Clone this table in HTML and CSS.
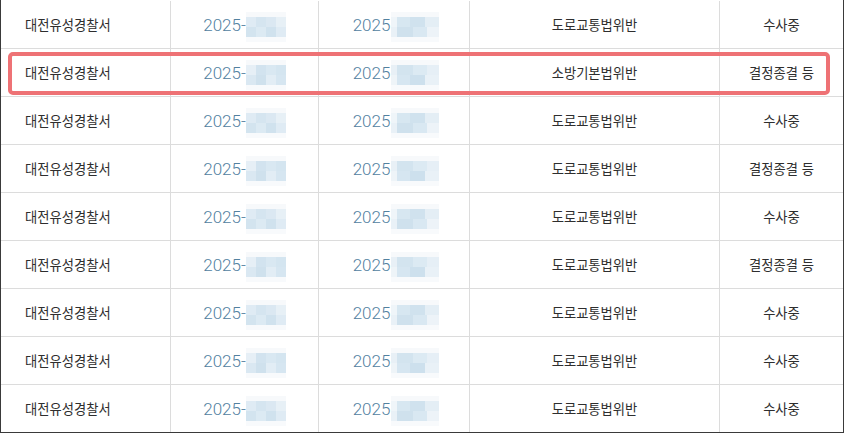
FILE: index.html
```html
<!DOCTYPE html>
<html lang="ko">
<head>
<meta charset="utf-8">
<title>사건 목록</title>
<link rel="stylesheet" href="styles.css">
</head>
<body>
<div class="board">
  <div class="row">
    <div class="cell c1">대전유성경찰서</div>
    <div class="cell c2 num">2025-<span class="blur b1"></span></div>
    <div class="cell c3 num">2025<span class="blur b2"></span></div>
    <div class="cell c4">도로교통법위반</div>
    <div class="cell c5">수사중</div>
  </div>
  <div class="row">
    <div class="cell c1">대전유성경찰서</div>
    <div class="cell c2 num">2025-<span class="blur b1 alt"></span></div>
    <div class="cell c3 num">2025<span class="blur b2 alt"></span></div>
    <div class="cell c4">소방기본법위반</div>
    <div class="cell c5">결정종결 등</div>
  </div>
  <div class="row">
    <div class="cell c1">대전유성경찰서</div>
    <div class="cell c2 num">2025-<span class="blur b1"></span></div>
    <div class="cell c3 num">2025<span class="blur b2"></span></div>
    <div class="cell c4">도로교통법위반</div>
    <div class="cell c5">수사중</div>
  </div>
  <div class="row">
    <div class="cell c1">대전유성경찰서</div>
    <div class="cell c2 num">2025-<span class="blur b1 alt"></span></div>
    <div class="cell c3 num">2025<span class="blur b2 alt"></span></div>
    <div class="cell c4">도로교통법위반</div>
    <div class="cell c5">결정종결 등</div>
  </div>
  <div class="row">
    <div class="cell c1">대전유성경찰서</div>
    <div class="cell c2 num">2025-<span class="blur b1"></span></div>
    <div class="cell c3 num">2025<span class="blur b2"></span></div>
    <div class="cell c4">도로교통법위반</div>
    <div class="cell c5">수사중</div>
  </div>
  <div class="row">
    <div class="cell c1">대전유성경찰서</div>
    <div class="cell c2 num">2025-<span class="blur b1 alt"></span></div>
    <div class="cell c3 num">2025<span class="blur b2 alt"></span></div>
    <div class="cell c4">도로교통법위반</div>
    <div class="cell c5">결정종결 등</div>
  </div>
  <div class="row">
    <div class="cell c1">대전유성경찰서</div>
    <div class="cell c2 num">2025-<span class="blur b1"></span></div>
    <div class="cell c3 num">2025<span class="blur b2"></span></div>
    <div class="cell c4">도로교통법위반</div>
    <div class="cell c5">수사중</div>
  </div>
  <div class="row">
    <div class="cell c1">대전유성경찰서</div>
    <div class="cell c2 num">2025-<span class="blur b1 alt"></span></div>
    <div class="cell c3 num">2025<span class="blur b2 alt"></span></div>
    <div class="cell c4">도로교통법위반</div>
    <div class="cell c5">수사중</div>
  </div>
  <div class="row last">
    <div class="cell c1">대전유성경찰서</div>
    <div class="cell c2 num">2025-<span class="blur b1"></span></div>
    <div class="cell c3 num">2025<span class="blur b2"></span></div>
    <div class="cell c4">도로교통법위반</div>
    <div class="cell c5">수사중</div>
  </div>
  <div class="highlight"></div>
</div>
</body>
</html>
```
FILE: styles.css
```css
html, body {
  margin: 0;
  padding: 0;
  background: #fff;
}

.board {
  position: relative;
  width: 844px;
  box-sizing: border-box;
  padding-top: 1px;
  border-left: 1px solid #3a3a3a;
  border-right: 1px solid #3a3a3a;
  border-bottom: 1px solid #3a3a3a;
  font-family: "Noto Sans CJK KR", "Noto Sans", sans-serif;
  font-size: 13.3px;
  color: #2e2e2e;
}

.row {
  display: grid;
  grid-template-columns: 170px 148px 151px 250px 1fr;
  height: 48px;
}

.row.last {
  height: 47px;
}

.cell {
  box-sizing: border-box;
  display: flex;
  align-items: center;
  justify-content: center;
  border-right: 1px solid #dcdcdc;
  border-bottom: 1px solid #dcdcdc;
  white-space: nowrap;
}

.row.last .cell {
  border-bottom: none;
}

.cell.c5 {
  border-right: none;
}

.cell.c1 {
  justify-content: flex-start;
  padding-left: 24px;
}

.cell.c3 {
  padding-left: 4px;
}

.num {
  font-family: Roboto, "Noto Sans", sans-serif;
  font-size: 17px;
  font-weight: 300;
  color: #52819f;
}

.blur {
  display: inline-block;
  height: 20px;
  margin-top: 4px;
  box-shadow: 0 -5px 0 #f7f9fb, 0 5px 0 #f8fafc;
}

.blur.b1 {
  width: 40px;
  background:
    linear-gradient(90deg, #dfebf4 0 25%, #d5e5f0 25% 50%, #dbe8f2 50% 75%, #e7f0f6 75%) top / 100% 50% no-repeat,
    linear-gradient(90deg, #d3e4ef 0 25%, #dceaf3 25% 50%, #d0e2ee 50% 75%, #dfebf4 75%) bottom / 100% 50% no-repeat;
}

.blur.b1.alt {
  background:
    linear-gradient(90deg, #e6eff6 0 25%, #d2e3ef 25% 50%, #d9e8f2 50% 75%, #d4e5f0 75%) top / 100% 50% no-repeat,
    linear-gradient(90deg, #dae8f2 0 25%, #cfe1ed 25% 50%, #e2edf5 50% 75%, #d6e6f1 75%) bottom / 100% 50% no-repeat;
}

.blur.b2 {
  width: 48px;
  margin-left: 1px;
  background:
    linear-gradient(90deg, #eff5f9 0 12%, #d7e7f1 12% 40%, #d0e2ee 40% 70%, #e4eef5 70%) top / 100% 50% no-repeat,
    linear-gradient(90deg, #e9f1f7 0 12%, #cfe1ed 12% 45%, #d9e8f2 45% 75%, #edf3f8 75%) bottom / 100% 50% no-repeat;
}

.blur.b2.alt {
  background:
    linear-gradient(90deg, #e8f0f6 0 12%, #d3e4ef 12% 45%, #dceaf3 45% 75%, #e6eff6 75%) top / 100% 50% no-repeat,
    linear-gradient(90deg, #eef4f8 0 12%, #d6e6f1 12% 40%, #cde0ed 40% 70%, #e9f1f7 70%) bottom / 100% 50% no-repeat;
}

.highlight {
  position: absolute;
  left: 7px;
  top: 52px;
  width: 822px;
  height: 43px;
  box-sizing: border-box;
  border: 4px solid #ee7275;
  border-radius: 5px;
  pointer-events: none;
}
```
